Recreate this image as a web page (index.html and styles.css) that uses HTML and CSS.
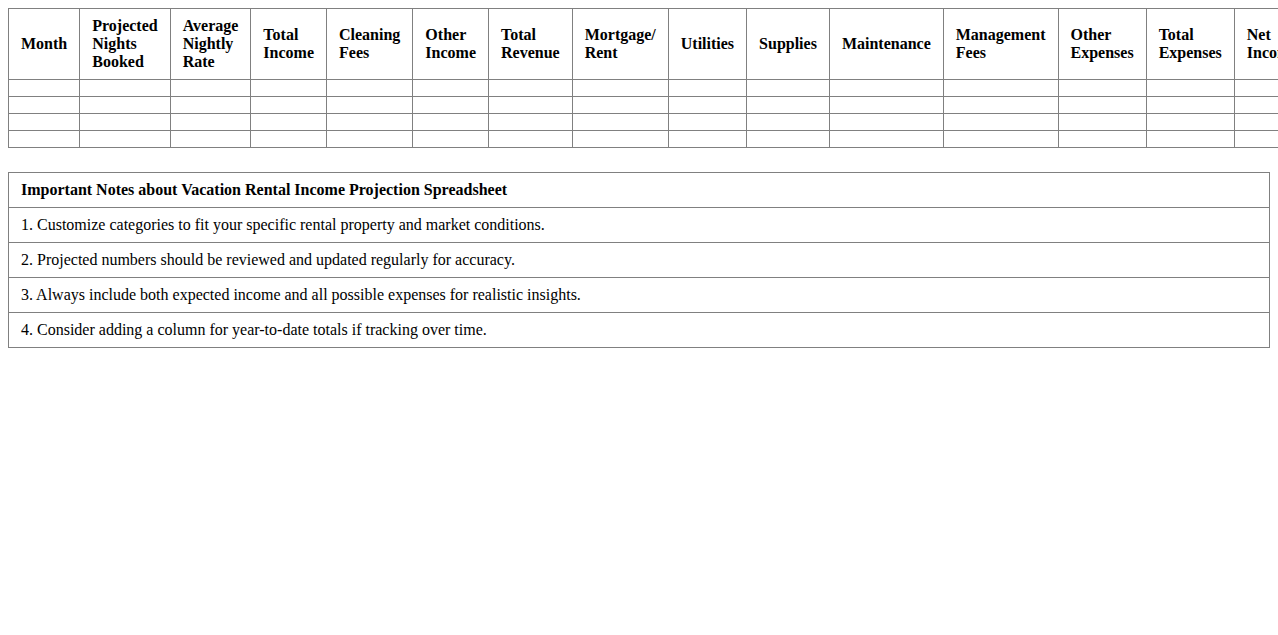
FILE: index.html
```html
<!DOCTYPE html>
<html lang="en">
<head>
<meta charset="utf-8">
<title>Vacation Rental Income Projection Spreadsheet</title>
<link rel="stylesheet" href="styles.css">
</head>
<body>
<table class="sheet">
  <thead>
    <tr>
      <th>Month</th>
      <th>Projected Nights Booked</th>
      <th>Average Nightly Rate</th>
      <th>Total Income</th>
      <th>Cleaning Fees</th>
      <th>Other Income</th>
      <th>Total Revenue</th>
      <th>Mortgage/ Rent</th>
      <th>Utilities</th>
      <th>Supplies</th>
      <th>Maintenance</th>
      <th>Management Fees</th>
      <th>Other Expenses</th>
      <th>Total Expenses</th>
      <th>Net Income</th>
    </tr>
  </thead>
  <tbody>
    <tr><td></td><td></td><td></td><td></td><td></td><td></td><td></td><td></td><td></td><td></td><td></td><td></td><td></td><td></td><td></td></tr>
    <tr><td></td><td></td><td></td><td></td><td></td><td></td><td></td><td></td><td></td><td></td><td></td><td></td><td></td><td></td><td></td></tr>
    <tr><td></td><td></td><td></td><td></td><td></td><td></td><td></td><td></td><td></td><td></td><td></td><td></td><td></td><td></td><td></td></tr>
    <tr><td></td><td></td><td></td><td></td><td></td><td></td><td></td><td></td><td></td><td></td><td></td><td></td><td></td><td></td><td></td></tr>
  </tbody>
</table>

<table class="notes">
  <thead>
    <tr><th>Important Notes about Vacation Rental Income Projection Spreadsheet</th></tr>
  </thead>
  <tbody>
    <tr><td>1. Customize categories to fit your specific rental property and market conditions.</td></tr>
    <tr><td>2. Projected numbers should be reviewed and updated regularly for accuracy.</td></tr>
    <tr><td>3. Always include both expected income and all possible expenses for realistic insights.</td></tr>
    <tr><td>4. Consider adding a column for year-to-date totals if tracking over time.</td></tr>
  </tbody>
</table>
</body>
</html>
```
FILE: styles.css
```css
html,
body {
  background: #ffffff;
}

body {
  margin: 0;
  padding: 8px;
  font-family: "Liberation Serif", "Times New Roman", serif;
  font-size: 16px;
  color: #000000;
}

.sheet,
.notes {
  width: 100%;
  border-collapse: collapse;
}

.sheet th,
.sheet td,
.notes th,
.notes td {
  border: 1px solid #808080;
  padding: 8px 12px;
  text-align: left;
}

.sheet th,
.notes th {
  font-weight: bold;
}

.notes {
  margin-top: 24px;
}
```
